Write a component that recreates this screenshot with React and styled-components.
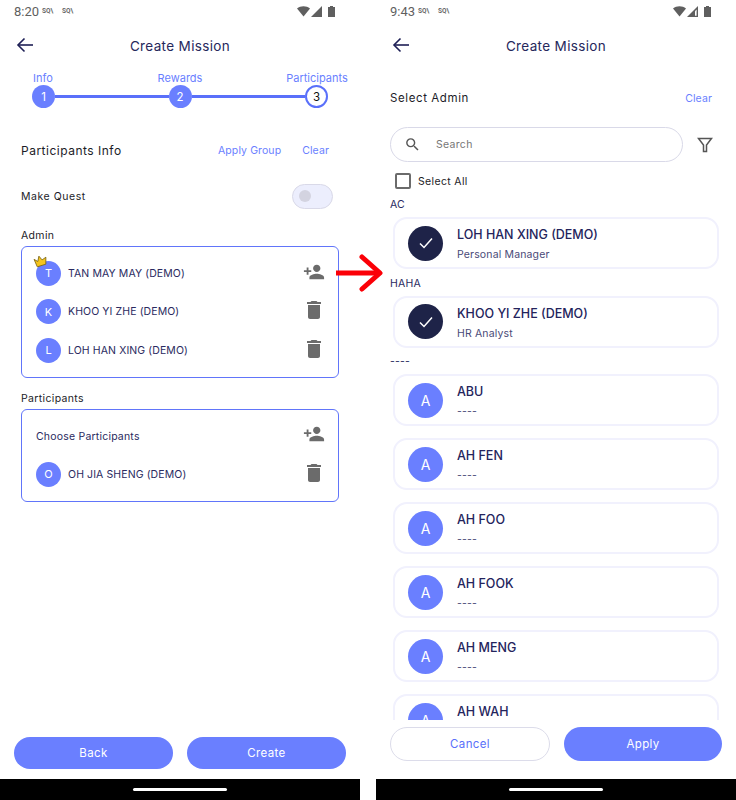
import React from "react";
import styled, { createGlobalStyle } from "styled-components";
import { MdPersonAdd, MdDelete, MdSearch } from "react-icons/md";

const GlobalStyle = createGlobalStyle`
    html, body {
        margin: 0;
        padding: 0;
        background: #fff;
    }
    * {
        box-sizing: border-box;
    }
`;

const Page = styled.div`
    position: relative;
    display: flex;
    gap: 16px;
    width: 736px;
    height: 800px;
    overflow: hidden;
    font-family: Inter, "Liberation Sans", sans-serif;
    background: #fff;
`;

const Screen = styled.div`
    display: flex;
    flex-direction: column;
    width: 360px;
    height: 800px;
    background: #fff;
`;

const StatusBar = styled.div`
    display: flex;
    align-items: center;
    height: 22px;
    padding: 0 25px 0 14px;
    color: #5f5f5f;
    font-family: Roboto, sans-serif;
    font-size: 13px;
`;

const StatusTime = styled.span`
    width: 27px;
`;

const NetTag = styled.span`
    display: inline-flex;
    align-items: center;
    width: 19px;
    margin-left: 1px;
    font-size: 6.5px;
    font-weight: 700;
    color: #666;
`;

const StatusIcons = styled.div`
    display: flex;
    align-items: center;
    gap: 1px;
    margin-left: auto;
`;

const BatterySlot = styled.span`
    display: flex;
    margin-left: 5px;
`;

const Header = styled.div`
    display: flex;
    align-items: center;
    height: 48px;
    padding-left: 16px;
`;

const BackIcon = styled.svg`
    width: 18px;
    height: 16px;
    flex: none;
    margin-top: -2px;
`;

const HeaderTitle = styled.div`
    flex: 1;
    padding-right: 34px;
    text-align: center;
    color: #26285c;
    font-size: 13.5px;
    font-weight: 400;
    letter-spacing: 0.35px;
`;

const StepLabels = styled.div`
    display: flex;
    justify-content: space-between;
    padding: 0 12px;
    height: 15px;
`;

const StepLabel = styled.span`
    width: 62px;
    text-align: center;
    color: #6a7fff;
    font-size: 11px;
    line-height: 16px;
    white-space: nowrap;
`;

const StepTrack = styled.div`
    display: flex;
    align-items: center;
    padding: 0 32px;
    margin-top: 0;
`;

const StepDot = styled.div`
    display: flex;
    align-items: center;
    justify-content: center;
    width: 23px;
    height: 23px;
    flex: none;
    border-radius: 50%;
    font-size: 11.5px;
    color: ${(p) => (p.$current ? "#111" : "#fff")};
    background: ${(p) => (p.$current ? "#fff" : "#6a7fff")};
    border: ${(p) => (p.$current ? "2px solid #5a70fa" : "none")};
`;

const StepLine = styled.div`
    flex: 1;
    height: 3px;
    background: #5a70fa;
`;

const InfoRow = styled.div`
    display: flex;
    align-items: center;
    height: 20px;
    margin-top: 32px;
    padding: 0 31px 0 21px;
`;

const InfoTitle = styled.div`
    flex: 1;
    color: #1c1c28;
    font-size: 12px;
    font-weight: 400;
    letter-spacing: 0.5px;
`;

const LinkText = styled.span`
    color: #6a7fff;
    font-size: 10.5px;
    letter-spacing: 0.1px;
    margin-left: ${(p) => p.$gap || 0}px;
`;

const QuestRow = styled.div`
    display: flex;
    align-items: center;
    justify-content: space-between;
    height: 24px;
    margin-top: 24px;
    padding: 0 27px 0 21px;
    color: #1c1c28;
    font-size: 10.5px;
    font-weight: 400;
    letter-spacing: 0.55px;
`;

const Toggle = styled.div`
    display: flex;
    align-items: center;
    width: 41px;
    height: 25px;
    padding-left: 6px;
    border-radius: 13px;
    background: #eceefd;
    border: 1.5px solid #d9d9e8;
`;

const ToggleKnob = styled.div`
    width: 12px;
    height: 12px;
    border-radius: 50%;
    background: #d3d3e0;
`;

const FieldLabel = styled.div`
    height: 14px;
    margin: ${(p) => p.$top}px 21px ${(p) => p.$bottom}px;
    color: #1c1c28;
    font-size: 10.5px;
    line-height: 14px;
    font-weight: 400;
    letter-spacing: 0.35px;
`;

const FieldBox = styled.div`
    margin: 0 21px;
    padding: 7px 14px;
    border: 1px solid #6175fa;
    border-radius: 6px;
`;

const PersonRow = styled.div`
    display: flex;
    align-items: center;
    gap: 7px;
    height: 38.5px;
`;

const SmallAvatar = styled.div`
    position: relative;
    display: flex;
    align-items: center;
    justify-content: center;
    width: 25px;
    height: 25px;
    flex: none;
    border-radius: 50%;
    color: #fff;
    font-size: 11px;
    background: #6a7fff;
`;

const Crown = styled.svg`
    position: absolute;
    top: -6px;
    left: -3px;
    width: 15px;
    height: 13px;
`;

const PersonName = styled.span`
    flex: 1;
    color: #2a2a60;
    font-size: 10.5px;
    letter-spacing: 0.1px;
`;

const RowPrompt = styled.span`
    flex: 1;
    margin-top: 2px;
    color: #2a2a60;
    font-size: 10.5px;
    letter-spacing: 0.2px;
`;

const RowIcon = styled.div`
    display: flex;
    justify-content: center;
    width: 24px;
    margin: -3px -2px 0 0;
    color: #6b6b6b;
    font-size: ${(p) => p.$size}px;
    line-height: 0;
`;

const Spacer = styled.div`
    flex: 1;
`;

const ActionBar = styled.div`
    display: flex;
    gap: 14px;
    padding: 0 14px 10px;
`;

const ActionButton = styled.div`
    display: flex;
    flex: 1;
    align-items: center;
    justify-content: center;
    height: ${(p) => p.$height}px;
    border-radius: 17px;
    font-size: 11.5px;
    letter-spacing: 0.35px;
    color: ${(p) => (p.$outline ? "#5a70fa" : "#fff")};
    background: ${(p) => (p.$outline ? "#fff" : "#6a7fff")};
    border: ${(p) => (p.$outline ? "1px solid #dcdcea" : "none")};
`;

const NavBar = styled.div`
    display: flex;
    align-items: center;
    justify-content: center;
    flex: none;
    height: 21px;
    background: #000;
`;

const HomeLine = styled.div`
    width: 94px;
    height: 3px;
    border-radius: 2px;
    background: #fff;
`;

const SelectRow = styled.div`
    display: flex;
    align-items: center;
    justify-content: space-between;
    height: 24px;
    margin-top: 16px;
    padding: 0 24px 0 14px;
    color: #1c1c28;
    font-size: 11.5px;
    font-weight: 400;
    letter-spacing: 0.6px;
`;

const SearchRow = styled.div`
    display: flex;
    align-items: center;
    margin-top: 17px;
    padding: 0 23px 0 14px;
`;

const SearchBox = styled.div`
    display: flex;
    align-items: center;
    flex: 1;
    height: 35px;
    padding-left: 13px;
    border: 1px solid #d9d9e8;
    border-radius: 18px;
    color: #555;
    font-size: 17px;
`;

const SearchText = styled.span`
    margin-left: 15px;
    color: #777;
    font-size: 10.5px;
    letter-spacing: 0.3px;
`;

const FilterIcon = styled.svg`
    width: 16px;
    height: 16px;
    margin-left: 14px;
    flex: none;
`;

const SelectAllRow = styled.div`
    display: flex;
    align-items: center;
    gap: 7px;
    height: 16px;
    margin-top: 11px;
    padding-left: 19px;
    color: #1c1c28;
    font-size: 10.5px;
    font-weight: 400;
    letter-spacing: 0.35px;
`;

const CheckBox = styled.div`
    width: 16px;
    height: 16px;
    border: 2px solid #6b6b6b;
    border-radius: 2px;
`;

const ListArea = styled.div`
    flex: 1;
    min-height: 0;
    margin-top: 8px;
    overflow: hidden;
`;

const GroupLabel = styled.div`
    height: 16px;
    padding-left: 14px;
    color: #2a2a60;
    font-size: 10.5px;
    line-height: 16px;
    letter-spacing: 0.2px;
`;

const Group = styled.div`
    display: flex;
    flex-direction: column;
    gap: 12px;
    padding: 4px 17px 6.5px;
`;

const Card = styled.div`
    display: flex;
    align-items: center;
    flex: none;
    height: 52px;
    padding-left: 13px;
    border: 2px solid #f1f1fd;
    border-radius: 14px;
`;

const CardAvatar = styled.div`
    display: flex;
    align-items: center;
    justify-content: center;
    width: 35px;
    height: 35px;
    flex: none;
    border-radius: 50%;
    color: #fff;
    font-size: 14px;
    background: ${(p) => (p.$selected ? "#1e2348" : "#6a7fff")};
`;

const CardText = styled.div`
    display: flex;
    flex-direction: column;
    gap: 6px;
    margin: 3px 0 0 14px;
`;

const CardName = styled.span`
    color: #24245c;
    font-size: 12.5px;
    font-weight: 500;
    line-height: 15px;
`;

const CardSub = styled.span`
    color: #4a4a78;
    font-size: 10.5px;
    line-height: 14px;
    letter-spacing: 0.15px;
`;

const FooterBar = styled.div`
    display: flex;
    gap: 14px;
    flex: none;
    padding: 7px 14px 18px;
    background: #fff;
`;

const RedArrow = styled.svg`
    position: absolute;
    left: 335px;
    top: 254px;
    width: 50px;
    height: 38px;
`;

const Wifi = () => (
    <svg width="13" height="11" viewBox="0 0 13 11">
        <path d="M0 2.5 C3.5 -0.6 9.5 -0.6 13 2.5 L6.5 10.5 Z" fill="#5f5f5f" />
    </svg>
);

const Signal = ({ hollow }) => (
    <svg width="11" height="11" viewBox="0 0 11 11">
        <path d="M11 0 V11 H0 Z" fill="#5f5f5f" />
        {hollow && <path d="M9.6 3.6 V9.8 H8 V5.2 Z" fill="#fff" />}
    </svg>
);

const Battery = () => (
    <svg width="7" height="11" viewBox="0 0 7 11">
        <path d="M2 0 H5 V1 H7 V11 H0 V1 H2 Z" fill="#5f5f5f" />
    </svg>
);

const Status = ({ time, hollow }) => (
    <StatusBar>
        <StatusTime>{time}</StatusTime>
        <NetTag>SQ\</NetTag>
        <NetTag>SQ\</NetTag>
        <StatusIcons>
            <Wifi />
            <Signal hollow={hollow} />
            <BatterySlot><Battery /></BatterySlot>
        </StatusIcons>
    </StatusBar>
);

const TopBar = () => (
    <Header>
        <BackIcon viewBox="0 0 18 16" fill="none" stroke="#1d1f55" strokeWidth="1.6">
            <path d="M17 8 H2" />
            <path d="M8.5 1.5 L2 8 L8.5 14.5" />
        </BackIcon>
        <HeaderTitle>Create Mission</HeaderTitle>
    </Header>
);

const Person = ({ name, action, crown }) => (
    <PersonRow>
        <SmallAvatar>
            {name[0]}
            {crown && (
                <Crown viewBox="0 0 14 12">
                    <path d="M1 4 L4.5 6 L5.5 1 L8.5 4.5 L12 2 L12 8.5 L4 11 Z" fill="#f6c51d" stroke="#7a6410" strokeWidth="0.8" />
                </Crown>
            )}
        </SmallAvatar>
        <PersonName>{name}</PersonName>
        {action === "add" ? (
            <RowIcon $size={22}><MdPersonAdd /></RowIcon>
        ) : (
            <RowIcon $size={24}><MdDelete /></RowIcon>
        )}
    </PersonRow>
);

const people = ["ABU", "AH FEN", "AH FOO", "AH FOOK", "AH MENG", "AH WAH"];

const Check = () => (
    <svg width="16" height="14" viewBox="0 0 16 14" fill="none" stroke="#fff" strokeWidth="1.5">
        <path d="M2 7.5 L6 11.5 L14 2.5" />
    </svg>
);

const LeftScreen = () => (
    <Screen>
        <Status time="8:20" />
        <TopBar />
        <StepLabels>
            <StepLabel>Info</StepLabel>
            <StepLabel>Rewards</StepLabel>
            <StepLabel>Participants</StepLabel>
        </StepLabels>
        <StepTrack>
            <StepDot>1</StepDot>
            <StepLine />
            <StepDot>2</StepDot>
            <StepLine />
            <StepDot $current>3</StepDot>
        </StepTrack>
        <InfoRow>
            <InfoTitle>Participants Info</InfoTitle>
            <LinkText>Apply Group</LinkText>
            <LinkText $gap={21}>Clear</LinkText>
        </InfoRow>
        <QuestRow>
            Make Quest
            <Toggle><ToggleKnob /></Toggle>
        </QuestRow>
        <FieldLabel $top={21} $bottom={3}>Admin</FieldLabel>
        <FieldBox>
            <Person name="TAN MAY MAY (DEMO)" action="add" crown />
            <Person name="KHOO YI ZHE (DEMO)" />
            <Person name="LOH HAN XING (DEMO)" />
        </FieldBox>
        <FieldLabel $top={14} $bottom={3}>Participants</FieldLabel>
        <FieldBox>
            <PersonRow>
                <RowPrompt>Choose Participants</RowPrompt>
                <RowIcon $size={22}><MdPersonAdd /></RowIcon>
            </PersonRow>
            <Person name="OH JIA SHENG (DEMO)" />
        </FieldBox>
        <Spacer />
        <ActionBar>
            <ActionButton $height={32}>Back</ActionButton>
            <ActionButton $height={32}>Create</ActionButton>
        </ActionBar>
        <NavBar><HomeLine /></NavBar>
    </Screen>
);

const RightScreen = () => (
    <Screen>
        <Status time="9:43" hollow />
        <TopBar />
        <SelectRow>
            Select Admin
            <LinkText>Clear</LinkText>
        </SelectRow>
        <SearchRow>
            <SearchBox>
                <MdSearch />
                <SearchText>Search</SearchText>
            </SearchBox>
            <FilterIcon viewBox="0 0 16 16" fill="none" stroke="#555" strokeWidth="1.5">
                <path d="M1.5 1.5 H14.5 L9.5 8 V14.5 H6.5 V8 Z" />
            </FilterIcon>
        </SearchRow>
        <SelectAllRow>
            <CheckBox />
            Select All
        </SelectAllRow>
        <ListArea>
            <GroupLabel>AC</GroupLabel>
            <Group>
                <Card>
                    <CardAvatar $selected><Check /></CardAvatar>
                    <CardText>
                        <CardName>LOH HAN XING (DEMO)</CardName>
                        <CardSub>Personal Manager</CardSub>
                    </CardText>
                </Card>
            </Group>
            <GroupLabel>HAHA</GroupLabel>
            <Group>
                <Card>
                    <CardAvatar $selected><Check /></CardAvatar>
                    <CardText>
                        <CardName>KHOO YI ZHE (DEMO)</CardName>
                        <CardSub>HR Analyst</CardSub>
                    </CardText>
                </Card>
            </Group>
            <GroupLabel>----</GroupLabel>
            <Group>
                {people.map((name) => (
                    <Card key={name}>
                        <CardAvatar>A</CardAvatar>
                        <CardText>
                            <CardName>{name}</CardName>
                            <CardSub>----</CardSub>
                        </CardText>
                    </Card>
                ))}
            </Group>
        </ListArea>
        <FooterBar>
            <ActionButton $height={34} $outline>Cancel</ActionButton>
            <ActionButton $height={34}>Apply</ActionButton>
        </FooterBar>
        <NavBar><HomeLine /></NavBar>
    </Screen>
);

const App = () => (
    <Page>
        <GlobalStyle />
        <LeftScreen />
        <RightScreen />
        <RedArrow viewBox="0 0 50 38" fill="none" stroke="#fb0007" strokeWidth="5">
            <path d="M1 19 H44" />
            <path d="M27 3 L45 19 L27 35" strokeLinecap="round" strokeLinejoin="round" />
        </RedArrow>
    </Page>
);

export default App;
